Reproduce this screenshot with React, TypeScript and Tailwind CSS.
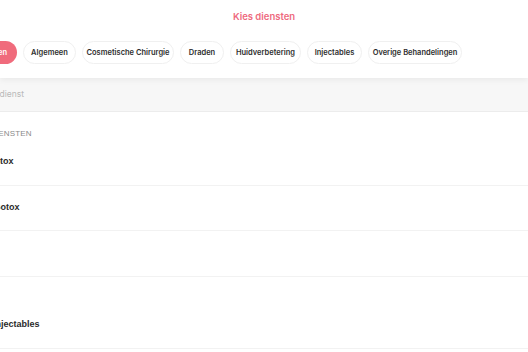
import React from "react";

const categories = [
  { label: "Alle diensten", w: "w-[57px]", active: true },
  { label: "Algemeen", w: "w-[53px]" },
  { label: "Cosmetische Chirurgie", w: "w-[92px]" },
  { label: "Draden", w: "w-[44px]" },
  { label: "Huidverbetering", w: "w-[71px]" },
  { label: "Injectables", w: "w-[55px]" },
  { label: "Overige Behandelingen", w: "w-[94px]" },
];

const App: React.FC = () => {
  return (
    <div className="w-[528px] h-[352px] overflow-hidden bg-white font-['Inter',sans-serif]">
      <div className="h-[78px] bg-white shadow-[0_2px_6px_rgba(0,0,0,0.06)] relative z-10">
        <div className="pt-[10px] text-center text-[9.5px] font-semibold text-[#ee6a7e]">
          Kies diensten
        </div>
        <div className="flex gap-[6px] ml-[-40px] mt-[17px]">
          {categories.map((c) => (
            <div
              key={c.label}
              className={
                c.active
                  ? `${c.w} h-[23px] shrink-0 rounded-full bg-[#f06b7c] text-white text-[7.5px] font-semibold flex items-center justify-end pr-[10px] whitespace-nowrap`
                  : `${c.w} h-[23px] shrink-0 rounded-full border border-[#f0f0f0] text-[#2d2d2d] text-[7.5px] font-semibold flex items-center justify-center whitespace-nowrap`
              }
            >
              {c.label}
            </div>
          ))}
        </div>
      </div>

      <div className="h-[34px] bg-[#f7f7f7] border-b border-[#ececec] flex items-center">
        <span className="ml-[-23px] text-[8.5px] text-[#b9b9b9]">Zoek dienst</span>
      </div>

      <div className="font-['Liberation_Sans',sans-serif]">
        <div className="pt-[17px] h-[27px]">
          <div className="ml-[-33px] text-[8px] leading-[10px] text-[#8a8a8a] tracking-[0.2px] whitespace-nowrap">
            ALLE DIENSTEN
          </div>
        </div>
        <div className="h-[47px] flex items-center border-b border-[#f2f2f2]">
          <span className="ml-[-12px] text-[9px] font-bold text-[#2a2a2a]">Botox</span>
        </div>
        <div className="h-[45px] flex items-center border-b border-[#f2f2f2]">
          <span className="ml-[-6px] text-[9px] font-bold text-[#2a2a2a]">Botox</span>
        </div>
        <div className="h-[46px] border-b border-[#f2f2f2]" />
        <div className="h-[72px] flex items-end pb-[17px] border-b border-[#f2f2f2]">
          <span className="ml-[-7px] text-[9px] font-bold text-[#2a2a2a]">Injectables</span>
        </div>
      </div>
    </div>
  );
};

export default App;
